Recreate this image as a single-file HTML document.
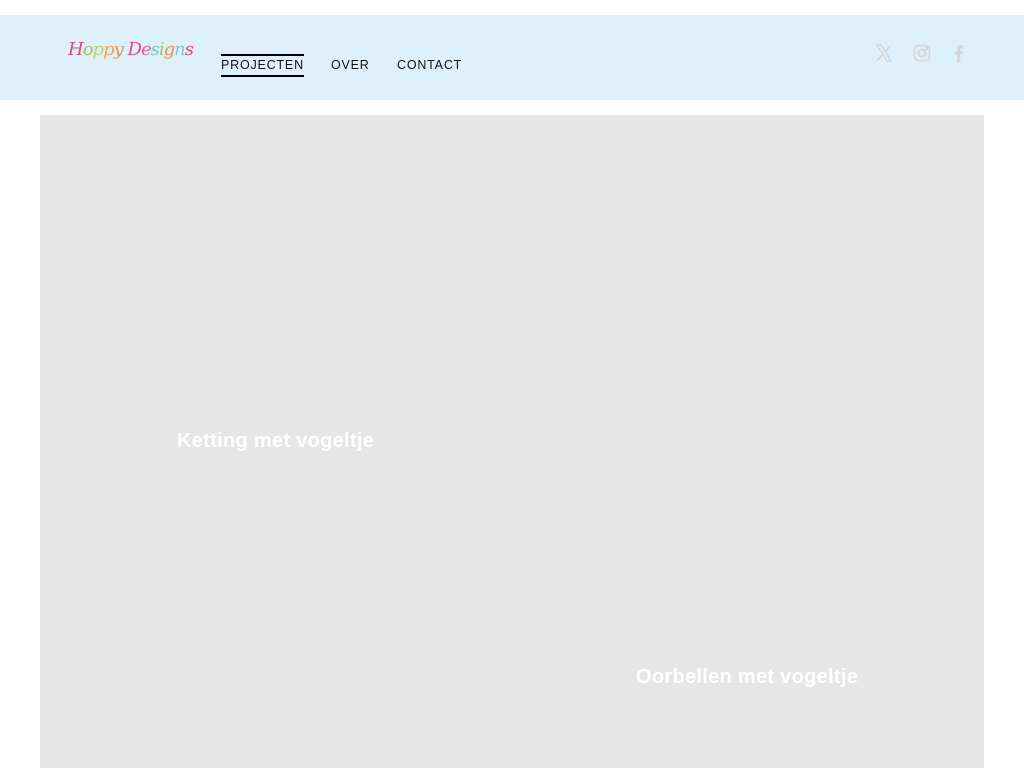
<!DOCTYPE html>
<html><head><meta charset="utf-8"><style>
body{margin:0;background:#fff;width:1024px;height:768px;overflow:hidden;font-family:"Liberation Sans",sans-serif}
.hdr{position:absolute;top:15px;left:0;width:1024px;height:85px;background:#dff0fd}
.logo{position:absolute;left:68px;top:24px;font-family:"DejaVu Serif",serif;font-style:italic;font-size:18px;letter-spacing:-1px;white-space:nowrap}
.nav{position:absolute;top:43px;font-size:12.5px;letter-spacing:0.8px;color:#111;line-height:15px}
.act{border-top:2px solid #000;border-bottom:2px solid #000;padding:2px 0;top:39px}
.main{position:absolute;left:40px;top:115px;width:944px;height:653px;background:#e6e6e6}
.cap{position:absolute;color:#fff;font-weight:bold;font-size:20px;letter-spacing:0.3px}
</style></head><body>
<div class="hdr">
<div class="logo"><span style="color:#e04878">H</span><span style="color:#9bc85a">o</span><span style="color:#c8d060">p</span><span style="color:#f0a050">p</span><span style="color:#e89040">y</span> <span style="color:#e84888">D</span><span style="color:#e86090">e</span><span style="color:#70c8c0">s</span><span style="color:#a0c860">i</span><span style="color:#f09050">g</span><span style="color:#80c8c8">n</span><span style="color:#e04870">s</span></div>
<div class="nav act" style="left:221px">PROJECTEN</div>
<div class="nav" style="left:331px">OVER</div>
<div class="nav" style="left:397px">CONTACT</div>
<svg style="position:absolute;left:875px;top:29px" width="18" height="18" viewBox="0 0 18 18" fill="none" stroke="#d6d6d6" stroke-width="1.6"><path d="M2 1h4l10 16h-4z M16 1L10 8 M2 17l6-7"/></svg>
<svg style="position:absolute;left:913px;top:29px" width="18" height="18" viewBox="0 0 18 18" fill="none" stroke="#d6d6d6" stroke-width="1.8"><rect x="1.5" y="1.5" width="15" height="15" rx="4"/><circle cx="9" cy="9" r="3.6"/><circle cx="13.5" cy="4.5" r="0.8" fill="#d6d6d6"/></svg>
<svg style="position:absolute;left:953px;top:29px" width="12" height="18" viewBox="0 0 12 18" fill="#d6d6d6"><path d="M4 18V10H1.5V7H4V4.5C4 2 5.5 1 7.5 1H10V4H8.3C7.5 4 7.3 4.4 7.3 5V7H10L9.5 10H7.3V18z"/></svg>
</div>
<div class="main">
<div class="cap" style="left:137px;top:315px">Ketting met vogeltje</div>
<div class="cap" style="left:596px;top:551px">Oorbellen met vogeltje</div>
</div>
</body></html>
